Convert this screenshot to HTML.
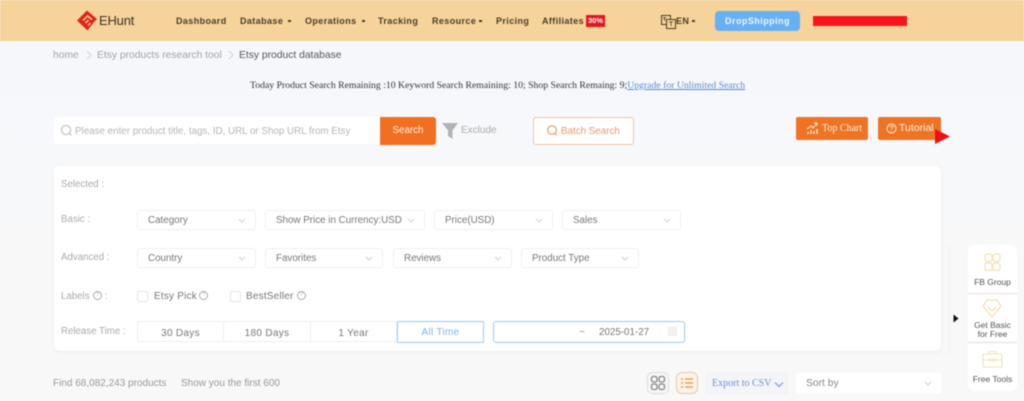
<!DOCTYPE html>
<html lang="en">
<head>
<meta charset="utf-8">
<title>EHunt</title>
<style>
html,body{margin:0;padding:0;width:1024px;height:401px;overflow:hidden;background:#f7f7f9}
body{position:relative;font-family:"Liberation Sans",sans-serif;color:#666;font-size:11px}
#w{position:absolute;left:0;top:0;width:1024px;height:401px;overflow:hidden;filter:blur(.45px);background:linear-gradient(#f6f7fb 0,#f7f8fb 130px,#f8f8f8 260px)}
.a{position:absolute;white-space:nowrap;line-height:14px}
.box{position:absolute;box-sizing:border-box}
.nav{font-weight:bold;font-size:9px;letter-spacing:.4px;color:#4a3d2a;top:14px}
.dot{position:absolute;top:20px;width:3px;height:2px;background:#4a3d2a}
.sel{position:absolute;box-sizing:border-box;height:20px;background:#fff;border:1px solid #eef0f3;border-radius:3px;font-size:9.8px;line-height:19px;padding-left:10px;color:#777;white-space:nowrap}
.sel.r2{line-height:20px}
.sel svg{position:absolute;right:8px;top:6px}
.lb{color:#aaa;font-size:9.7px}
.seg{position:absolute;top:321px;height:21px;box-sizing:border-box;background:#fff;border:1px solid #eceef1;text-align:center;font-size:10px;line-height:23px;color:#777;letter-spacing:.3px}
.chk{position:absolute;width:9px;height:9px;border:1px solid #e6e6e6;border-radius:2px;background:#fff}
.q{position:absolute;width:7px;height:7px;border:1px solid #aaa;border-radius:50%;font-size:6px;line-height:7px;text-align:center;color:#aaa}
.side{position:absolute;left:968px;width:49px;background:#fff;box-sizing:border-box;text-align:center;font-size:8.5px;line-height:9px;color:#555}
</style>
</head>
<body>
<div id="w">
<svg width="0" height="0" style="position:absolute"><defs><path id="c" d="M2 2L5 5L8 2" fill="none" stroke="#cdd0d4" stroke-width="1"/></defs></svg>

<!-- header -->
<div class="box" style="left:0;top:0;width:1024px;height:41px;background:#f6d39a"></div>
<svg class="box" style="left:77px;top:10px" width="21" height="21" viewBox="0 0 21 21"><path d="M0 10.5L10 .5L20 9L17 12L10.5 20.5Z" fill="#e2231a"/><path d="M6 10.5L10.5 6L15 9.5M8.5 13L11.5 10M11 15.5L13.5 13" fill="none" stroke="#f6d39a" stroke-width="1.5"/></svg>
<div class="a" style="left:99px;top:14px;font-size:13px;color:#3d3226;letter-spacing:-.2px">EHunt</div>
<div class="a nav" style="left:176px">Dashboard</div>
<div class="a nav" style="left:240px">Database</div><div class="dot" style="left:288px"></div>
<div class="a nav" style="left:305px">Operations</div><div class="dot" style="left:362px"></div>
<div class="a nav" style="left:378px">Tracking</div>
<div class="a nav" style="left:432px">Resource</div><div class="dot" style="left:479px"></div>
<div class="a nav" style="left:496px">Pricing</div>
<div class="a nav" style="left:542px">Affiliates</div>
<div class="a" style="left:586px;top:15px;width:19px;height:12px;background:#e8141c;color:#fff;font-weight:bold;font-size:7.5px;line-height:12px;text-align:center">30%</div>
<svg class="box" style="left:661px;top:15px" width="15" height="14" viewBox="0 0 15 14"><rect x=".5" y=".5" width="9" height="9" fill="none" stroke="#4a3d2a"/><rect x="5.5" y="4.5" width="9" height="9" fill="#f6d39a" stroke="#4a3d2a"/><path d="M2 3h3M3.5 2v4M8 7h4M10 7v4" stroke="#4a3d2a" fill="none" stroke-width=".8"/></svg>
<div class="a nav" style="left:676px">EN</div>
<div class="dot" style="left:692px"></div>
<div class="box" style="left:715px;top:11px;width:85px;height:20px;background:#66b1f5;border-radius:4px;color:#eaf4fd;font-weight:bold;font-size:9px;letter-spacing:.45px;line-height:20px;text-align:center">DropShipping</div>
<div class="box" style="left:813px;top:16px;width:94px;height:10px;background:#f8141c"></div>

<!-- breadcrumb -->
<div class="a" style="left:53px;top:48px;font-size:10.3px;color:#a3a3a3;line-height:15px">home</div>
<svg class="box" style="left:86px;top:50px" width="7" height="10"><path d="M1 1L5 5L1 9" fill="none" stroke="#d4d4d4"/></svg>
<div class="a" style="left:97px;top:48px;font-size:10.3px;color:#a3a3a3;line-height:15px">Etsy products research tool</div>
<svg class="box" style="left:228px;top:50px" width="7" height="10"><path d="M1 1L5 5L1 9" fill="none" stroke="#d4d4d4"/></svg>
<div class="a" style="left:239px;top:48px;font-size:10.3px;color:#555;line-height:15px">Etsy product database</div>

<!-- remaining -->
<div class="a" style="left:250px;top:79px;font-family:'Liberation Serif',serif;font-size:9.73px;color:#333">Today Product Search Remaining :10 Keyword Search Remaining: 10; Shop Search Remaing: 9;<span style="color:#5b8bd0;text-decoration:underline">Upgrade for Unlimited Search</span></div>

<!-- search -->
<div class="box" style="left:54px;top:117px;width:327px;height:27px;background:#fff;border-radius:3px 0 0 3px"></div>
<svg class="box" style="left:60px;top:124px" width="13" height="13"><circle cx="6" cy="6" r="4.6" fill="none" stroke="#bbb"/><path d="M9.4 9.4L11.5 11.5" stroke="#bbb"/></svg>
<div class="a" style="left:75px;top:125px;font-size:9.8px;color:#b5b5b5">Please enter product title, tags, ID, URL or Shop URL from Etsy</div>
<div class="box" style="left:380px;top:117px;width:56px;height:28px;background:#f26f21;border-radius:0 3px 3px 0;color:#fff4ea;font-size:9.8px;line-height:28px;text-align:center">Search</div>
<svg class="box" style="left:441px;top:122px" width="18" height="18"><path d="M1 1H17L11.5 8.5V17L7 14V8.5Z" fill="#b3b3b3"/></svg>
<div class="a" style="left:461px;top:124px;font-size:10px;color:#aaa">Exclude</div>
<div class="box" style="left:533px;top:117px;width:101px;height:28px;border:1px solid #f0c4a8;border-radius:3px;background:#fff;color:#e99a6c;font-size:9.8px;line-height:27px;padding-left:27px">Batch Search</div>
<svg class="box" style="left:546px;top:124px" width="13" height="13"><circle cx="6" cy="6" r="4.3" fill="none" stroke="#e99a6c" stroke-width="1.2"/><path d="M9 9.5L11 11.5" stroke="#e99a6c"/></svg>

<!-- top chart / tutorial -->
<div class="box" style="left:796px;top:117px;width:72px;height:23px;background:#ee7424;border-radius:2px;color:#fff1e4;font-family:'Liberation Serif',serif;font-size:10px;line-height:23px;padding-left:26px">Top Chart</div>
<svg class="box" style="left:806px;top:122px" width="13" height="13" fill="none" stroke="#fff1e4"><path d="M1 7L5 4L7 6L11 1M8 1h3v3"/><path d="M2 12V10M5 12V8M8 12V9M11 12V7" stroke-width="1.3"/></svg>
<div class="box" style="left:878px;top:117px;width:63px;height:23px;background:#ee7424;border-radius:2px;color:#fff1e4;font-size:10.5px;line-height:23px;padding-left:21px">Tutorial</div>
<svg class="box" style="left:886px;top:123px" width="11" height="11"><circle cx="5.5" cy="5.5" r="4.5" fill="none" stroke="#fff1e4"/><path d="M4 4.3C4 2.6 7 2.6 7 4.3C7 5.3 5.5 5.3 5.5 6.6M5.5 7.7v1" fill="none" stroke="#fff1e4" stroke-width=".8"/></svg>
<svg class="box" style="left:934px;top:128px" width="17" height="17"><path d="M1 1L16 8.5L1 16Z" fill="#ee0f14"/></svg>

<!-- filter card -->
<div class="box" style="left:54px;top:166px;width:887px;height:185px;background:#fff;border-radius:6px;box-shadow:0 1px 5px rgba(0,0,0,.05)"></div>
<div class="a lb" style="left:61px;top:178px">Selected :</div>
<div class="a lb" style="left:61px;top:213px">Basic :</div>
<div class="a lb" style="left:61px;top:251px">Advanced :</div>
<div class="a lb" style="left:61px;top:290px">Labels</div>
<div class="q" style="left:93px;top:291px">?</div>
<div class="a lb" style="left:105px;top:290px">:</div>
<div class="a lb" style="left:61px;top:325px">Release Time :</div>

<div class="sel" style="left:137px;top:210px;width:119px">Category<svg width="10" height="7"><use href="#c"/></svg></div>
<div class="sel" style="left:265px;top:210px;width:160px">Show Price in Currency:USD<svg width="10" height="7"><use href="#c"/></svg></div>
<div class="sel" style="left:434px;top:210px;width:119px">Price(USD)<svg width="10" height="7"><use href="#c"/></svg></div>
<div class="sel" style="left:562px;top:210px;width:119px">Sales<svg width="10" height="7"><use href="#c"/></svg></div>
<div class="sel r2" style="left:137px;top:248px;width:119px">Country<svg width="10" height="7"><use href="#c"/></svg></div>
<div class="sel r2" style="left:265px;top:248px;width:118px">Favorites<svg width="10" height="7"><use href="#c"/></svg></div>
<div class="sel r2" style="left:393px;top:248px;width:119px">Reviews<svg width="10" height="7"><use href="#c"/></svg></div>
<div class="sel r2" style="left:521px;top:248px;width:118px">Product Type<svg width="10" height="7"><use href="#c"/></svg></div>

<div class="chk" style="left:137px;top:291px"></div>
<div class="a" style="left:154px;top:290px;font-size:10px;color:#777;letter-spacing:.2px">Etsy Pick</div>
<div class="q" style="left:199px;top:291px">?</div>
<div class="chk" style="left:230px;top:291px"></div>
<div class="a" style="left:246px;top:290px;font-size:10px;color:#777;letter-spacing:.2px">BestSeller</div>
<div class="q" style="left:297px;top:291px">?</div>

<div class="seg" style="left:137px;width:87px;border-radius:3px 0 0 3px">30 Days</div>
<div class="seg" style="left:223px;width:88px">180 Days</div>
<div class="seg" style="left:310px;width:87px">1 Year</div>
<div class="seg" style="left:397px;width:87px;height:22px;border:1px solid #9ccaee;border-radius:2px;color:#83b4e8;line-height:22px">All Time</div>
<div class="box" style="left:493px;top:321px;width:192px;height:22px;border:1px solid #9ccaee;border-radius:3px;background:#fff"></div>
<div class="a" style="left:579px;top:326px;font-size:10px;color:#888">~</div>
<div class="a" style="left:599px;top:326px;font-size:9.8px;color:#777">2025-01-27</div>
<div class="box" style="left:668px;top:327px;width:9px;height:9px;background:#f2f2f2;border:1px solid #ececec"></div>

<!-- results bar -->
<div class="a" style="left:53px;top:377px;font-size:10px;color:#999">Find 68,082,243 products</div>
<div class="a" style="left:181px;top:377px;font-size:10px;color:#999">Show you the first 600</div>
<div class="box" style="left:647px;top:372px;width:22px;height:22px;border:1px solid #ddd;border-radius:5px;background:#f6f6f6"></div>
<svg class="box" style="left:650px;top:375px" width="16" height="16" fill="none" stroke="#888" stroke-width="1.3"><rect x="1.5" y="1.5" width="5.5" height="5.5" rx="1.8"/><rect x="9" y="1.5" width="5.5" height="5.5" rx="1.8"/><rect x="1.5" y="9" width="5.5" height="5.5" rx="1.8"/><rect x="9" y="9" width="5.5" height="5.5" rx="1.8"/></svg>
<div class="box" style="left:676px;top:372px;width:22px;height:22px;border:1px solid #f2c79c;border-radius:6px;background:#fbf4ec"></div>
<svg class="box" style="left:680px;top:376px" width="14" height="14" stroke="#ee9f45" stroke-width="1.4"><path d="M1 3h2M5 3h8M1 7h2M5 7h8M1 11h2M5 11h8"/></svg>
<div class="box" style="left:706px;top:373px;width:82px;height:21px;background:#f3f5f9;border:1px solid #eff1f5;color:#6f8fd0;font-family:'Liberation Serif',serif;font-size:10px;line-height:20px;padding-left:5px">Export to CSV</div>
<svg class="box" style="left:774px;top:381px" width="10" height="7"><path d="M1 1.5L5 5.5L9 1.5" fill="none" stroke="#6f8fd0"/></svg>
<div class="box" style="left:796px;top:373px;width:145px;height:20px;background:#fff;font-size:10.3px;line-height:21px;padding-left:10px;color:#888">Sort by</div>
<svg class="box" style="left:923px;top:380px" width="10" height="7"><use href="#c"/></svg>

<!-- sidebar -->
<div class="box" style="left:949px;top:245px;width:1px;height:110px;background:#f2f2f2"></div>
<svg class="box" style="left:953px;top:314px" width="6" height="9"><path d="M.5 .5L5.5 4.5L.5 8.5Z" fill="#111"/></svg>
<div class="side" style="top:245px;height:49px;border-radius:7px 7px 0 0;border-bottom:1px solid #e0e0e0;padding-top:33px">FB Group</div>
<svg class="box" style="left:984px;top:253px" width="17" height="18" fill="none" stroke="#f5e0b8" stroke-width="1.2"><rect x="1" y="1" width="7" height="7.5" rx="2.5"/><rect x="9" y="1" width="7" height="7.5" rx="2.5"/><rect x="1" y="10" width="7" height="7.5" rx="1.5"/><rect x="9" y="10" width="7" height="7.5" rx="2.5"/></svg>
<div class="side" style="top:294px;height:49px;border-bottom:1px solid #e0e0e0;padding-top:27px">Get Basic<br>for Free</div>
<svg class="box" style="left:982px;top:299px" width="20" height="19" fill="none" stroke="#f5e0b8" stroke-width="1.3"><path d="M5 1H15L19 7L10 18L1 7Z"/><path d="M6 8L10 12L14 8"/></svg>
<div class="side" style="top:343px;height:48px;border-radius:0 0 7px 7px;padding-top:32px">Free Tools</div>
<svg class="box" style="left:982px;top:350px" width="21" height="18" fill="none" stroke="#f5e0b8" stroke-width="1.1"><rect x="1" y="4" width="19" height="13" rx="1"/><path d="M7 4V1.5H14V4M1 10H7M14 10H20"/><rect x="7.5" y="9" width="6" height="2"/></svg>
</div>
</body>
</html>
